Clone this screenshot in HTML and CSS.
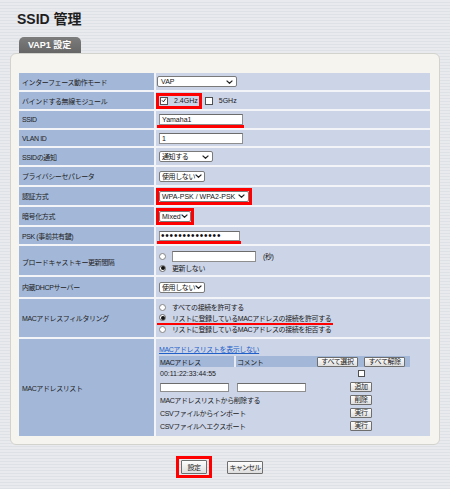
FILE: index.html
```html
<!DOCTYPE html>
<html lang="ja">
<head>
<meta charset="utf-8">
<title>SSID 管理</title>
<link rel="stylesheet" href="styles.css">
</head>
<body>
<h1 class="title">SSID 管理</h1>
<div class="tab">VAP1 設定</div>
<div class="panel">
  <table class="form">
    <colgroup><col class="col-l"><col></colgroup>
    <tr class="r17">
      <td class="lbl"><div class="c">インターフェース動作モード</div></td>
      <td class="val"><div class="c"><span class="sel w80 shift">VAP<svg class="chev" viewBox="0 0 7 4"><path d="M0.6 0.6L3.5 3.3L6.4 0.6"/></svg></span></div></td>
    </tr>
    <tr class="r17">
      <td class="lbl"><div class="c">バインドする無線モジュール</div></td>
      <td class="val"><div class="c">
        <span class="hl hl-cb"><span class="cb"><svg class="tick" viewBox="0 0 8 8"><path d="M1.4 3.8L3.2 5.8L6.4 1.4"/></svg></span><span class="cbtext">2.4GHz</span></span>
        <span class="cb cb2"></span><span class="cbtext">5GHz</span>
      </div></td>
    </tr>
    <tr class="r17">
      <td class="lbl"><div class="c">SSID</div></td>
      <td class="val"><div class="c"><span class="ul"><span class="inp w84">Yamaha1</span></span></div></td>
    </tr>
    <tr class="r16">
      <td class="lbl"><div class="c">VLAN ID</div></td>
      <td class="val"><div class="c"><span class="inp w84">1</span></div></td>
    </tr>
    <tr class="r17">
      <td class="lbl"><div class="c">SSIDの通知</div></td>
      <td class="val"><div class="c"><span class="sel w54 j">通知する<svg class="chev" viewBox="0 0 7 4"><path d="M0.6 0.6L3.5 3.3L6.4 0.6"/></svg></span></div></td>
    </tr>
    <tr class="r18">
      <td class="lbl"><div class="c">プライバシーセパレータ</div></td>
      <td class="val"><div class="c"><span class="sel w46 j">使用しない<svg class="chev" viewBox="0 0 7 4"><path d="M0.6 0.6L3.5 3.3L6.4 0.6"/></svg></span></div></td>
    </tr>
    <tr class="r18">
      <td class="lbl"><div class="c">認証方式</div></td>
      <td class="val"><div class="c"><span class="hl"><span class="sel w90">WPA-PSK / WPA2-PSK<svg class="chev" viewBox="0 0 7 4"><path d="M0.6 0.6L3.5 3.3L6.4 0.6"/></svg></span></span></div></td>
    </tr>
    <tr class="r18">
      <td class="lbl"><div class="c">暗号化方式</div></td>
      <td class="val"><div class="c"><span class="hl"><span class="sel w32">Mixed<svg class="chev" viewBox="0 0 7 4"><path d="M0.6 0.6L3.5 3.3L6.4 0.6"/></svg></span></span></div></td>
    </tr>
    <tr class="r17">
      <td class="lbl"><div class="c">PSK (事前共有鍵)</div></td>
      <td class="val"><div class="c"><span class="ul"><span class="inp w81 pw">••••••••••••••</span></span></div></td>
    </tr>
    <tr class="r29">
      <td class="lbl"><div class="c">ブロードキャストキー更新間隔</div></td>
      <td class="val"><div class="c col">
        <div class="line l12"><span class="rd"></span><span class="inp w84 tall"></span><span class="j sec">(秒)</span></div>
        <div class="line l12"><span class="rd on"></span><span class="j">更新しない</span></div>
      </div></td>
    </tr>
    <tr class="r20">
      <td class="lbl"><div class="c">内蔵DHCPサーバー</div></td>
      <td class="val"><div class="c"><span class="sel w46 j">使用しない<svg class="chev" viewBox="0 0 7 4"><path d="M0.6 0.6L3.5 3.3L6.4 0.6"/></svg></span></div></td>
    </tr>
    <tr class="r38">
      <td class="lbl"><div class="c">MACアドレスフィルタリング</div></td>
      <td class="val"><div class="c col">
        <div class="line l11"><span class="rd"></span><span class="j">すべての接続を許可する</span></div>
        <div class="line l10 uline"><span class="rd on"></span><span class="j">リストに登録しているMACアドレスの接続を許可する</span></div>
        <div class="line l11"><span class="rd"></span><span class="j">リストに登録しているMACアドレスの接続を拒否する</span></div>
      </div></td>
    </tr>
    <tr class="r97">
      <td class="lbl"><div class="c">MACアドレスリスト</div></td>
      <td class="val"><div class="c top">
        <div class="maclist">
          <div class="mrow-link j"><a class="link" href="#">MACアドレスリストを表示しない</a></div>
          <div class="mh mh1 j">MACアドレス</div>
          <div class="mh j">コメント</div>
          <div class="mh mh3"><button class="btn-s">すべて選択</button><button class="btn-s">すべて解除</button></div>
          <div class="mc">00:11:22:33:44:55</div>
          <div class="mc"></div>
          <div class="mc mc3"><span class="cb cb-s"></span></div>
          <div class="mc"><span class="inp w69 sm"></span></div>
          <div class="mc"><span class="inp w69 sm"></span></div>
          <div class="mc mc3"><button class="btn-s">追加</button></div>
          <div class="mc span2 j">MACアドレスリストから削除する</div>
          <div class="mc mc3"><button class="btn-s">削除</button></div>
          <div class="mc span2 j">CSVファイルからインポート</div>
          <div class="mc mc3"><button class="btn-s">実行</button></div>
          <div class="mc span2 j">CSVファイルへエクスポート</div>
          <div class="mc mc3"><button class="btn-s">実行</button></div>
        </div>
      </div></td>
    </tr>
  </table>
</div>
<div class="actions">
  <span class="hl-btn"><button class="btn btn-set">設定</button></span>
  <button class="btn btn-cancel">キャンセル</button>
</div>
</body>
</html>
```

FILE: styles.css
```css
* { box-sizing: border-box; }
html, body { margin: 0; padding: 0; }
body {
  width: 450px;
  height: 489px;
  overflow: hidden;
  font-family: "Liberation Sans", "Noto Sans CJK JP", sans-serif;
  font-size: 7px;
  color: #1a1a1a;
  background: repeating-linear-gradient(180deg, #e8eaee 0, #e8eaee 2px, #dee1e6 2px, #dee1e6 3px);
}
.title {
  margin: 0;
  padding: 11px 0 0 17px;
  font-size: 14px;
  line-height: 16px;
  font-weight: bold;
  color: #1e1e1e;
}
.tab {
  margin: 10px 0 0 19px;
  width: 62px;
  height: 16px;
  padding-left: 9px;
  border-radius: 5px 5px 0 0;
  background: linear-gradient(#7c7c7c, #666);
  color: #fff;
  font-size: 9px;
  font-weight: bold;
  line-height: 16px;
}
.panel {
  margin-left: 10px;
  width: 430px;
  height: 392px;
  border: 1px solid #d3d3cd;
  border-radius: 6px;
  background: #f5f4ef;
  padding: 19px 9px 0 8px;
}
.form {
  width: 411px;
  border-collapse: separate;
  border-spacing: 0;
  table-layout: fixed;
}
.col-l { width: 137px; }
.form td {
  padding: 0;
  border-bottom: 2px solid #f2f4f8;
}
.form tr:last-child td { border-bottom: 0; }
.lbl {
  background: #a3b8d9;
  border-right: 2px solid #f2f4f8;
  color: #222;
  letter-spacing: -0.4px;
}
.val { background: #ccd4e7; }
.c {
  display: flex;
  align-items: center;
  padding-left: 3px;
  white-space: nowrap;
}
.c.col { flex-direction: column; align-items: flex-start; justify-content: center; }
.c.top { display: block; padding-top: 3px; }
.r16 .c { height: 16px; }
.r17 .c { height: 17px; }
.r18 .c { height: 18px; }
.r20 .c { height: 20px; }
.r29 .c { height: 29px; padding-top: 3px; }
.r38 .c { height: 38px; }
.r97 .c { height: 97px; }

.j { letter-spacing: -0.4px; }

/* select-like box */
.sel {
  display: inline-flex;
  align-items: center;
  justify-content: space-between;
  height: 11px;
  padding: 0 3px 0 2px;
  border: 1px solid #7a7a7a;
  border-radius: 2px;
  background: #fff;
  font-size: 7px;
  line-height: 9px;
  color: #111;
}
.sel.shift { margin-left: -2px; padding-left: 3px; }
.chev {
  width: 7px;
  height: 4px;
  flex: none;
  fill: none;
  stroke: #222;
  stroke-width: 1.2;
}
.w32 { width: 32px; }
.w46 { width: 46px; }
.w54 { width: 54px; }
.w69 { width: 69px; }
.w80 { width: 80px; }
.w81 { width: 81px; }
.w84 { width: 84px; }
.w90 { width: 90px; }

/* text input box */
.inp {
  display: inline-block;
  height: 11px;
  padding-left: 2px;
  border: 1px solid #8e8e8e;
  border-top-color: #6c6c6c;
  background: #fff;
  font-size: 7px;
  line-height: 9px;
  color: #111;
}
.inp.tall { height: 11px; }
.inp.sm { height: 9px; }
.inp.pw {
  height: 10px;
  font-size: 10px;
  line-height: 8px;
  letter-spacing: 0.8px;
  padding-left: 1px;
  overflow: hidden;
}

/* red highlight annotations */
.hl {
  display: inline-flex;
  align-items: center;
  margin-left: -3px;
  border: 3px solid #f00;
}
.hl-cb { height: 16px; padding: 0 1px 0 1px; }
.ul {
  display: inline-flex;
  margin: 0 0 -3px -2px;
  padding: 0 1px 0 2px;
  border-bottom: 3px solid #f00;
}

/* checkbox & radio */
.cb {
  display: inline-flex;
  align-items: center;
  justify-content: center;
  width: 8px;
  height: 8px;
  border: 1px solid #505050;
  background: #fff;
  flex: none;
}
.tick {
  width: 7px;
  height: 7px;
  fill: none;
  stroke: #111;
  stroke-width: 1.2;
}
.cbtext { margin-left: 6px; }
.cb2 { margin-left: 3px; }
.cb-s { width: 7px; height: 7px; }
.rd {
  display: inline-flex;
  align-items: center;
  justify-content: center;
  width: 7px;
  height: 7px;
  border: 1px solid #858585;
  border-radius: 50%;
  background: #fff;
  flex: none;
  margin-right: 6px;
}
.rd.on { border-color: #666; }
.rd.on::after {
  content: "";
  width: 4px;
  height: 4px;
  border-radius: 50%;
  background: #111;
}
.line {
  display: flex;
  align-items: center;
  width: fit-content;
}
.l10 { height: 10px; }
.l11 { height: 11px; }
.l12 { height: 12px; }
.sec { margin-left: 7px; }
.uline {
  margin-left: -2px;
  padding: 0 2px 0 2px;
  border-bottom: 2px solid #f00;
  box-sizing: content-box;
  margin-bottom: -1px;
}

/* MAC address list */
.maclist {
  display: grid;
  width: 251px;
  grid-template-columns: 77px 76px 98px;
  grid-template-rows: 13px 12px 13px 14px 12px 13px 13px;
  align-items: center;
}
.mrow-link { grid-column: 1 / -1; }
.link { color: #2060c8; text-decoration: underline; }
.mh {
  align-self: end;
  height: 11px;
  display: flex;
  align-items: center;
  padding-left: 1px;
  background: #a3b8d9;
}
.mh1 { border-right: 2px solid #e6eaf3; }
.mh3 { justify-content: center; gap: 6px; padding-left: 0; }
.mc { padding-left: 1px; display: flex; align-items: center; }
.mc3 { justify-content: center; padding-left: 0; }
.span2 { grid-column: 1 / 3; }

/* buttons */
.btn-s, .btn {
  appearance: none;
  margin: 0;
  font-family: "Liberation Sans", "Noto Sans CJK JP", sans-serif;
  color: #222;
  letter-spacing: -0.4px;
  white-space: nowrap;
  border: 1px solid #6e6e6e;
  border-radius: 1px;
  background: linear-gradient(#fdfdfd, #dedede);
  cursor: pointer;
}
.btn-s {
  height: 10px;
  padding: 0 3.5px;
  font-size: 7px;
  line-height: 8px;
}
.actions {
  display: flex;
  align-items: center;
  gap: 15px;
  padding: 11px 0 0 176px;
}
.hl-btn {
  display: inline-flex;
  border: 3px solid #f00;
  padding: 1px 2px;
}
.btn {
  height: 13px;
  padding: 0 3px;
  font-size: 7px;
  line-height: 11px;
}
.btn-set { width: 26px; height: 14px; }
.btn-cancel { width: 36px; padding: 0 1px; letter-spacing: -0.8px; }
```
